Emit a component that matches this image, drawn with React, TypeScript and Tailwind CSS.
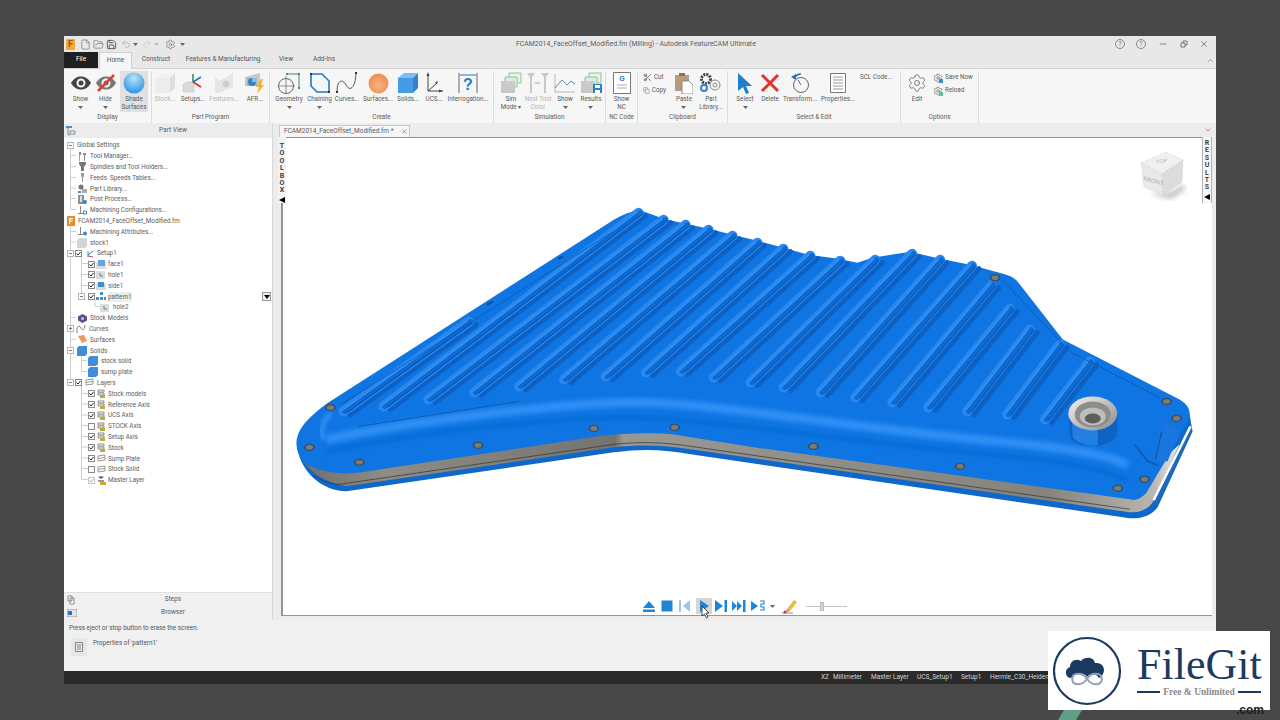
import type { ReactNode } from "react";
import { ChevronDown, ChevronUp, Copy, File, FolderOpen, Minus, Redo2, Save, Scissors, Settings, Undo2, X } from "lucide-react";

const font = "font-['Roboto','Liberation_Sans',sans-serif]";

function Caret({ className = "text-[#666]" }: { className?: string }) {
  return (
    <svg width="5" height="3" viewBox="0 0 5 3" className={className}>
      <path d="M0 0h5L2.5 3z" fill="currentColor" />
    </svg>
  );
}

function RibbonBtn({ w, icon, lines, dim, drop }: { w: string; icon: ReactNode; lines: string[]; dim?: boolean; drop?: boolean }) {
  return (
    <div className={`${w} flex flex-col items-center shrink-0`}>
      <div className="h-[24px] flex items-center justify-center">{icon}</div>
      <div className={`flex flex-col items-center leading-[8px] whitespace-nowrap ${dim ? "text-[#b5b5b5]" : "text-[#5a5a5a]"}`}>
        {lines.map((l) => (
          <span key={l} className="h-[8px]">{l}</span>
        ))}
        {drop && <span className="h-[8px] flex items-center"><Caret /></span>}
      </div>
    </div>
  );
}

function Group({ w, label, children, last }: { w: string; label: string; children: ReactNode; last?: boolean }) {
  return (
    <div className={`${w} shrink-0 flex flex-col ${last ? "" : "border-r border-[#dcdcdc]"}`}>
      <div className="h-[41px] flex">{children}</div>
      <div className="h-[11px] text-center leading-[10px] text-[#5a5a5a]">{label}</div>
    </div>
  );
}

const Eye = ({ slash }: { slash?: boolean }) => (
  <svg width="20" height="20" viewBox="0 0 20 20">
    <path d="M0 10C3 5 6.500 3.500 10 3.500S17 5 20 10c-3 5-6.500 6.500-10 6.500S3 15 0 10z" fill={slash ? "#777" : "#444"} />
    <circle cx="10" cy="10" r="4.500" fill="#f5f5f5" />
    <circle cx="10" cy="10" r="2.500" fill={slash ? "#777" : "#444"} />
    {slash && <path d="M2 18L18 2" stroke="#e23a2e" strokeWidth="2.500" />}
  </svg>
);

const Cube = ({ top, left, right, size = 22 }: { top: string; left: string; right: string; size?: number }) => (
  <svg width={size} height={size} viewBox="0 0 22 22">
    <path d="M1 6L7 1h14l-5 5z" fill={top} />
    <path d="M1 6h15v15H1z" fill={left} />
    <path d="M16 6l5-5v15l-5 5z" fill={right} />
  </svg>
);

const MiniStack = ({ last }: { last?: boolean }) => (
  <svg width="22" height="22" viewBox="0 0 22 22">
    <path d="M9 1h12v10H9z" fill="#e8f4e8" stroke="#8cc79a" />
    <path d="M5 5h12v10H5z" fill="#dcefdf" stroke="#8cc79a" />
    <path d="M1 9h14v12H1z" fill="#c9c9c9" />
    {last && <path d="M13 12h9v9h-9z" fill="#2d7fc8" />}
    {last && <path d="M15 13h5v3h-5zM15 18h5v3h-5z" fill="#fff" />}
  </svg>
);

function RibbonIcon({ name }: { name: string }) {
  switch (name) {
    case "sphere":
      return (
        <svg width="22" height="22" viewBox="0 0 22 22">
          <defs>
            <radialGradient id="sph" cx="50%" cy="28%" r="70%">
              <stop offset="0%" stopColor="#b9e4fb" />
              <stop offset="100%" stopColor="#2e95e4" />
            </radialGradient>
          </defs>
          <circle cx="11" cy="11" r="10.500" fill="url(#sph)" />
        </svg>
      );
    case "setups":
      return (
        <svg width="22" height="22" viewBox="0 0 22 22">
          <path d="M1 13l3-3h8v10H1z" fill="#dadada" stroke="#bdbdbd" strokeWidth=".5" />
          <path d="M11 10V2" stroke="#1f9a56" strokeWidth="1.600" />
          <path d="M11 10l8-5" stroke="#2374d0" strokeWidth="1.600" />
          <path d="M11 10l8 5" stroke="#e0283a" strokeWidth="1.600" />
        </svg>
      );
    case "features":
      return (
        <svg width="22" height="22" viewBox="0 0 22 22">
          <path d="M2 5l4 4v12H2zM6 9l14-8v14l-14 6z" fill="#e6e6e6" />
          <circle cx="13" cy="12" r="3.500" fill="#cfcfcf" />
        </svg>
      );
    case "afr":
      return (
        <svg width="22" height="22" viewBox="0 0 22 22">
          <path d="M1 5l15-4v13H1z" fill="#c8c8c8" />
          <path d="M3 6h10v8H3z" fill="#9bb6cf" />
          <path d="M8 6a4 4 0 1 0 4 4H8z" fill="#2a85d2" />
          <path d="M17 7l-5 8h3l-2 7 7-9h-3l2-6z" fill="#f2b233" />
        </svg>
      );
    case "geometry":
      return (
        <svg width="24" height="24" viewBox="0 0 24 24" fill="none" stroke="#666" strokeWidth="1">
          <circle cx="9" cy="15" r="7.500" />
          <path d="M9 5v18M1 15h17" strokeWidth=".7" />
          <path d="M10 3h12v14" stroke="#5b7a8e" />
          <path d="M9 2h2v2H9zM21 2h2v2h-2zM21 16h2v2h-2z" fill="#2f9e68" stroke="none" />
        </svg>
      );
    case "chaining":
      return (
        <svg width="22" height="22" viewBox="0 0 22 22" fill="none">
          <path d="M2 2h11l7 7v11H8l-6-6z" stroke="#1f7ac8" strokeWidth="1.600" />
          <path d="M1 1h2v2H1zM19 19h2v2h-2z" fill="#333" />
        </svg>
      );
    case "curves":
      return (
        <svg width="24" height="24" viewBox="0 0 24 24" fill="none">
          <path d="M2 21C2 8 8 8 11 14s9 5 10-11" stroke="#555" strokeWidth="1" />
          <path d="M1 20h2v2H1zM20 1h2v2h-2z" fill="#333" />
        </svg>
      );
    case "surfaces":
      return (
        <svg width="21" height="21" viewBox="0 0 21 21">
          <defs>
            <radialGradient id="org" cx="50%" cy="60%" r="60%">
              <stop offset="0%" stopColor="#f9b27f" />
              <stop offset="100%" stopColor="#ec8c4d" />
            </radialGradient>
          </defs>
          <circle cx="10.500" cy="10.500" r="10" fill="url(#org)" />
        </svg>
      );
    case "ucs":
      return (
        <svg width="20" height="22" viewBox="0 0 20 22" fill="none" stroke="#444" strokeWidth="1">
          <path d="M4 3v16h15M4 19l9-8" />
          <path d="M2.500 4L4 0l1.500 4zM15 17.500l4 1.500-4 1.500zM11 10.500l3-1.500-1 3z" fill="#444" stroke="none" />
        </svg>
      );
    case "interrogation":
      return (
        <svg width="22" height="22" viewBox="0 0 22 22" fill="none">
          <path d="M2 1v20M20 1v20" stroke="#666" />
          <path d="M3 3h16" stroke="#1f7ac8" />
          <text x="11" y="18" textAnchor="middle" fontSize="16" fontWeight="700" fill="#1f7ac8" fontFamily="Liberation Sans">?</text>
        </svg>
      );
    case "next":
      return (
        <svg width="22" height="22" viewBox="0 0 22 22" fill="#c8c8c8">
          <path d="M0 1h8L5 5v16H3V5zM14 1h8l-3 4v16h-2V5z" />
          <path d="M8 11h5" stroke="#aaa" />
        </svg>
      );
    case "chart":
      return (
        <svg width="22" height="20" viewBox="0 0 22 20" fill="none">
          <path d="M1 1v18h20" stroke="#b8b8b8" />
          <path d="M1 15l7-8 5 5 4-4 4 3" stroke="#6288a8" />
        </svg>
      );
    case "nc":
      return (
        <svg width="18" height="22" viewBox="0 0 18 22" fill="#fff" stroke="#777">
          <path d="M.500.500h17v21H.500z" />
          <path d="M4 13h10M4 16h10" stroke="#aaa" />
          <text x="9" y="9" textAnchor="middle" fontSize="7" fontWeight="700" fill="#2374c8" stroke="none" fontFamily="Liberation Sans">G</text>
        </svg>
      );
    case "paste":
      return (
        <svg width="18" height="22" viewBox="0 0 18 22">
          <path d="M0 3h14v16H0z" fill="#b99b7a" />
          <path d="M4 1h6v3H4z" fill="#8a7058" />
          <path d="M7 9h7l4 4v9H7z" fill="#fff" stroke="#777" strokeWidth=".8" />
        </svg>
      );
    case "library":
      return (
        <svg width="24" height="22" viewBox="0 0 24 22" fill="none">
          <circle cx="7" cy="7" r="4.500" stroke="#444" strokeWidth="3" strokeDasharray="2 1" />
          <circle cx="16" cy="13" r="5" stroke="#888" />
          <circle cx="16" cy="13" r="2" stroke="#888" />
          <circle cx="5" cy="16" r="3" stroke="#2f85d0" strokeWidth="2" />
        </svg>
      );
    case "select":
      return (
        <svg width="16" height="22" viewBox="0 0 16 22">
          <path d="M1 1l14 13H9l3 7-3 1-3-7-5 4z" fill="#1f7ed0" />
        </svg>
      );
    case "delete":
      return (
        <svg width="20" height="20" viewBox="0 0 20 20">
          <path d="M2 2l16 16M18 2L2 18" stroke="#e0342c" strokeWidth="3" />
        </svg>
      );
    case "transform":
      return (
        <svg width="20" height="22" viewBox="0 0 20 22" fill="none" stroke="#666">
          <circle cx="11" cy="13" r="7.500" />
          <path d="M5 5a7 7 0 0 1 6-3" stroke="#2374c8" strokeWidth="1.400" />
          <path d="M1 5l5-3 0 6z" fill="#2374c8" stroke="none" />
          <path d="M11 13l-3-5" stroke="#2374c8" />
        </svg>
      );
    case "props":
      return (
        <svg width="16" height="20" viewBox="0 0 16 20" fill="#fff" stroke="#777">
          <path d="M.500.500h15v19H.500z" />
          <path d="M3 4h10M3 7h10M3 10h10M3 13h10M3 16h10" stroke="#999" />
        </svg>
      );
    default:
      return null;
  }
}

function SmallGear({ color }: { color: string }) {
  return (
    <span className="relative w-[10px] h-[10px] flex">
      <Settings size={10} className="text-[#666]" strokeWidth={1.600} />
      <span className={`absolute right-0 bottom-0 w-[4px] h-[4px] ${color}`} />
    </span>
  );
}

function Ribbon() {
  return (
    <div className={`h-[55px] bg-[#f6f6f6] border-t border-[#d2d2d2] pt-[2px] flex text-[6.300px] ${font}`}>
      <Group w="w-[88px]" label="Display">
        <div className="w-[4px]" />
        <RibbonBtn w="w-[25px]" icon={<Eye />} lines={["Show"]} drop />
        <RibbonBtn w="w-[25px]" icon={<Eye slash />} lines={["Hide"]} drop />
        <div className="w-[2px]" />
        <div className="w-[28px] h-[41px] bg-[#e0e0e0]">
          <RibbonBtn w="w-[28px]" icon={<RibbonIcon name="sphere" />} lines={["Shade", "Surfaces"]} />
        </div>
      </Group>
      <Group w="w-[118px]" label="Part Program">
        <RibbonBtn w="w-[26px]" icon={<Cube top="#f2f2f2" left="#ececec" right="#dedede" />} lines={["Stock..."]} dim />
        <RibbonBtn w="w-[30px]" icon={<RibbonIcon name="setups" />} lines={["Setups..."]} />
        <RibbonBtn w="w-[32px]" icon={<RibbonIcon name="features" />} lines={["Features..."]} dim />
        <RibbonBtn w="w-[30px]" icon={<RibbonIcon name="afr" />} lines={["AFR..."]} />
      </Group>
      <Group w="w-[224px]" label="Create">
        <RibbonBtn w="w-[38px]" icon={<RibbonIcon name="geometry" />} lines={["Geometry"]} drop />
        <RibbonBtn w="w-[23px]" icon={<RibbonIcon name="chaining" />} lines={["Chaining"]} drop />
        <RibbonBtn w="w-[32px]" icon={<RibbonIcon name="curves" />} lines={["Curves..."]} />
        <RibbonBtn w="w-[30px]" icon={<RibbonIcon name="surfaces" />} lines={["Surfaces..."]} />
        <RibbonBtn w="w-[30px]" icon={<Cube top="#79bdf2" left="#449ce6" right="#2f83cf" />} lines={["Solids..."]} />
        <RibbonBtn w="w-[22px]" icon={<RibbonIcon name="ucs" />} lines={["UCS..."]} />
        <RibbonBtn w="w-[46px]" icon={<RibbonIcon name="interrogation" />} lines={["Interrogation..."]} />
      </Group>
      <Group w="w-[112px]" label="Simulation">
        <div className="w-[2px]" />
        <RibbonBtn w="w-[30px]" icon={<MiniStack />} lines={["Sim", "Mode ▾"]} />
        <RibbonBtn w="w-[24px]" icon={<RibbonIcon name="next" />} lines={["Next Tool", "Color"]} dim />
        <RibbonBtn w="w-[30px]" icon={<RibbonIcon name="chart" />} lines={["Show"]} drop />
        <RibbonBtn w="w-[22px]" icon={<MiniStack last />} lines={["Results"]} drop />
      </Group>
      <Group w="w-[32px]" label="NC Code">
        <RibbonBtn w="w-[31px]" icon={<RibbonIcon name="nc" />} lines={["Show", "NC"]} />
      </Group>
      <Group w="w-[90px]" label="Clipboard">
        <div className="w-[28px] shrink-0 pl-[5px] pt-[2px] flex flex-col gap-[4px] text-[#5a5a5a]">
          <div className="flex items-center gap-[2px] h-[9px]"><Scissors size={9} className="text-[#555]" />Cut</div>
          <div className="flex items-center gap-[2px] h-[9px]"><Copy size={9} className="text-[#777]" />Copy</div>
        </div>
        <div className="w-[4px]" />
        <RibbonBtn w="w-[28px]" icon={<RibbonIcon name="paste" />} lines={["Paste"]} drop />
        <RibbonBtn w="w-[26px]" icon={<RibbonIcon name="library" />} lines={["Part", "Library..."]} />
      </Group>
      <Group w="w-[173px]" label="Select & Edit">
        <div className="w-[4px]" />
        <RibbonBtn w="w-[26px]" icon={<RibbonIcon name="select" />} lines={["Select"]} drop />
        <RibbonBtn w="w-[24px]" icon={<RibbonIcon name="delete" />} lines={["Delete"]} />
        <RibbonBtn w="w-[36px]" icon={<RibbonIcon name="transform" />} lines={["Transform..."]} />
        <RibbonBtn w="w-[40px]" icon={<RibbonIcon name="props" />} lines={["Properties..."]} />
        <div className="pl-[2px] pt-[2px] h-[13px] leading-[9px] text-[#5a5a5a] whitespace-nowrap">SCL Code...</div>
      </Group>
      <Group w="w-[78px]" label="Options">
        <div className="w-[2px]" />
        <RibbonBtn w="w-[28px]" icon={<Settings size={20} strokeWidth={1} className="text-[#666]" />} lines={["Edit"]} />
        <div className="pl-[2px] pt-[2px] flex flex-col gap-[4px] text-[#5a5a5a]">
          <div className="flex items-center gap-[2px] h-[9px] whitespace-nowrap"><SmallGear color="bg-[#3d8fc9]" />Save Now</div>
          <div className="flex items-center gap-[2px] h-[9px]"><SmallGear color="bg-[#5fbf9a]" />Reload</div>
        </div>
      </Group>
    </div>
  );
}

function Expander({ open = true, w }: { open?: boolean; w: string }) {
  return (
    <span className={`${w} shrink-0 flex`}>
      <span className="w-[7px] h-[7px] bg-white border border-[#b5b5b5] flex items-center justify-center relative">
        <span className="w-[3px] h-px bg-[#777]" />
        {!open && <span className="absolute w-px h-[3px] bg-[#777]" />}
      </span>
    </span>
  );
}

function Check({ on = true, faint, w = "w-[8px]" }: { on?: boolean; faint?: boolean; w?: string }) {
  return (
    <span className={`${w} shrink-0 flex`}>
      <span className={`w-[7px] h-[7px] bg-white border ${faint ? "border-[#c5c5c5]" : "border-[#8a8a8a]"} flex items-center justify-center`}>
        {on && (
          <svg width="5" height="5" viewBox="0 0 5 5" fill="none">
            <path d="M.5 2.500l1.500 1.500L4.500 1" stroke={faint ? "#aaa" : "#222"} strokeWidth="1" />
          </svg>
        )}
      </span>
    </span>
  );
}

function TreeIcon({ kind, w }: { kind: string; w: string }) {
  const box = "w-[9px] h-[9px]";
  let g: ReactNode = null;
  if (kind === "tool") g = <svg className={box} viewBox="0 0 9 9"><path d="M1 0h2v3H1.800v6H1zM5 1h3v2H7v6H6V3H5z" fill="#8c8c8c" /></svg>;
  if (kind === "spindle") g = <svg className={box} viewBox="0 0 9 9"><path d="M1 0h7v2L6 5v4H3V5L1 2z" fill="#777" /></svg>;
  if (kind === "feeds") g = <svg className={box} viewBox="0 0 9 9"><path d="M3 0h3v3L5 5v4H4V5L3 3z" fill="#9a9a9a" /></svg>;
  if (kind === "lib") g = <svg className={box} viewBox="0 0 9 9"><circle cx="3" cy="3" r="2.500" fill="#777" /><path d="M4 5h5v4H4z" fill="#aaa" /><path d="M0 7h3v2H0z" fill="#3f8fd2" /></svg>;
  if (kind === "post") g = <svg className={box} viewBox="0 0 9 9"><path d="M0 0h6v9H0z" fill="#8f8f8f" /><path d="M2 1h2v6H2z" fill="#ddd" /><circle cx="7" cy="7" r="2" fill="#2f85d0" /></svg>;
  if (kind === "cfg") g = <svg className={box} viewBox="0 0 9 9"><path d="M2 0v7H0v1h5V7H3V0z" fill="#888" /><path d="M5.500 5h3v3h-3z" fill="none" stroke="#2f85d0" /></svg>;
  if (kind === "attr") g = <svg className={box} viewBox="0 0 9 9"><path d="M2 0v7H0v1h5V7H3V0z" fill="#888" /><circle cx="7" cy="6.500" r="2" fill="#2f85d0" /></svg>;
  if (kind === "logo") g = <svg className="w-[8px] h-[10px]" viewBox="0 0 8 10"><path d="M0 0h8v10H0z" fill="#e8892c" /><path d="M2 2h4v1.200H3.200V4.500H5.500v1.200H3.200V8H2z" fill="#fff" /></svg>;
  if (kind === "stock") g = <svg className="w-[10px] h-[10px]" viewBox="0 0 10 10"><path d="M0 2l2-2h8v8l-2 2H0z" fill="#d4d4d4" /></svg>;
  if (kind === "axes") g = <svg className={box} viewBox="0 0 9 9" fill="none"><path d="M3 8V2" stroke="#2f9e68" /><path d="M3 6l5-4" stroke="#2374c8" /><path d="M3 7l5 1" stroke="#c94c4c" /></svg>;
  if (kind === "face") g = <svg className="w-[10px] h-[9px]" viewBox="0 0 10 9"><path d="M0 2h10v7H0z" fill="#dcdcdc" /><path d="M2 0h7v6H2z" fill="#5ea7e4" /></svg>;
  if (kind === "hole") g = <svg className="w-[10px] h-[9px]" viewBox="0 0 10 9"><path d="M0 1h9v8H0z" fill="#dcdcdc" /><path d="M4 3v3h3" stroke="#5d7f9e" fill="none" /></svg>;
  if (kind === "side") g = <svg className="w-[10px] h-[9px]" viewBox="0 0 10 9"><path d="M0 2h10v7H0z" fill="#dcdcdc" /><path d="M2 1h6v5H2z" fill="#3f8fd2" /></svg>;
  if (kind === "pattern") g = <svg className="w-[10px] h-[9px]" viewBox="0 0 10 9" fill="#3f8fd2"><path d="M4 0h3v3H4zM0 5h3v3H0zM4 5h3v3H4zM8 5h2v3H8z" /></svg>;
  if (kind === "models") g = <svg className={box} viewBox="0 0 9 9"><path d="M4.500 0L9 2.500v4L4.500 9 0 6.500v-4z" fill="#5b4f8f" /><circle cx="4.500" cy="4.500" r="1.500" fill="#c8c2e8" /></svg>;
  if (kind === "curve") g = <svg className="w-[11px] h-[9px]" viewBox="0 0 11 9" fill="none"><path d="M1 9V5c0-3 3-4 4-1s4 2 4-3" stroke="#777" /></svg>;
  if (kind === "surf") g = <svg className={box} viewBox="0 0 9 9"><path d="M0 1l6-1 3 6-5 2z" fill="#ec9a5e" /></svg>;
  if (kind === "solid") g = <svg className="w-[10px] h-[10px]" viewBox="0 0 10 10"><path d="M0 2l2-2h8v8l-2 2H0z" fill="#3f8fd8" /></svg>;
  if (kind === "layers") g = <svg className="w-[9px] h-[9px]" viewBox="0 0 9 9" fill="none" stroke="#999"><path d="M1 2l7-1M1 4.500l7-1M1 7l7-1" /><path d="M1 2v5M8 1v5" /></svg>;
  if (kind === "layerA") g = <svg className="w-[9px] h-[9px]" viewBox="0 0 9 9"><path d="M1 1h6v2H1zM1 4h6v2H1z" fill="none" stroke="#8a8a8a" /><path d="M3 6h5v3H3z" fill="#b7ad3e" /></svg>;
  if (kind === "master") g = <svg className="w-[9px] h-[9px]" viewBox="0 0 9 9"><path d="M1 1l3-1 3 1-3 2z" fill="#6a5f9a" /><path d="M1 4h6v2H1z" fill="#999" /><path d="M3 6h6v3H3z" fill="#d8a92e" /></svg>;
  return <span className={`${w} shrink-0 flex items-center justify-center`}>{g}</span>;
}

type Row = { label: string; pl: string; exp?: string; closed?: boolean; check?: boolean; off?: boolean; faint?: boolean; icon?: string; iw?: string; gap: string; marker?: boolean; sel?: boolean };

const rows: Row[] = [
  { label: "Global Settings", pl: "pl-[3px]", exp: "w-[10px]", gap: "ml-0" },
  { label: "Tool Manager...", pl: "pl-[12px]", icon: "tool", iw: "w-[12px]", gap: "ml-[2px]" },
  { label: "Spindles and Tool Holders...", pl: "pl-[12px]", icon: "spindle", iw: "w-[12px]", gap: "ml-[2px]" },
  { label: "Feeds  Speeds Tables...", pl: "pl-[12px]", icon: "feeds", iw: "w-[12px]", gap: "ml-[2px]" },
  { label: "Part Library...", pl: "pl-[12px]", icon: "lib", iw: "w-[12px]", gap: "ml-[2px]" },
  { label: "Post Process...", pl: "pl-[12px]", icon: "post", iw: "w-[12px]", gap: "ml-[2px]" },
  { label: "Machining Configurations...", pl: "pl-[12px]", icon: "cfg", iw: "w-[12px]", gap: "ml-[2px]" },
  { label: "FCAM2014_FaceOffset_Modified.fm", pl: "pl-[1px]", icon: "logo", iw: "w-[12px]", gap: "ml-px" },
  { label: "Machining Attributes...", pl: "pl-[12px]", icon: "attr", iw: "w-[12px]", gap: "ml-[2px]" },
  { label: "stock1", pl: "pl-[12px]", icon: "stock", iw: "w-[12px]", gap: "ml-[2px]" },
  { label: "Setup1", pl: "pl-[3px]", exp: "w-[8px]", check: true, icon: "axes", iw: "w-[12px]", gap: "ml-[2px]" },
  { label: "face1", pl: "pl-[24px]", check: true, icon: "face", iw: "w-[10px]", gap: "ml-[2px]" },
  { label: "hole1", pl: "pl-[24px]", check: true, icon: "hole", iw: "w-[10px]", gap: "ml-[2px]" },
  { label: "side1", pl: "pl-[24px]", check: true, icon: "side", iw: "w-[10px]", gap: "ml-[2px]" },
  { label: "pattern1", pl: "pl-[14px]", exp: "w-[10px]", check: true, icon: "pattern", iw: "w-[10px]", gap: "ml-[2px]", marker: true, sel: true },
  { label: "hole2", pl: "pl-[36px]", icon: "hole", iw: "w-[10px]", gap: "ml-[3px]" },
  { label: "Stock Models", pl: "pl-[12px]", icon: "models", iw: "w-[12px]", gap: "ml-[2px]" },
  { label: "Curves", pl: "pl-[3px]", exp: "w-[9px]", closed: true, icon: "curve", iw: "w-[11px]", gap: "ml-[2px]" },
  { label: "Surfaces", pl: "pl-[12px]", icon: "surf", iw: "w-[12px]", gap: "ml-[2px]" },
  { label: "Solids", pl: "pl-[3px]", exp: "w-[9px]", icon: "solid", iw: "w-[12px]", gap: "ml-[2px]" },
  { label: "stock solid", pl: "pl-[23px]", icon: "solid", iw: "w-[12px]", gap: "ml-[2px]" },
  { label: "sump plate", pl: "pl-[23px]", icon: "solid", iw: "w-[12px]", gap: "ml-[2px]" },
  { label: "Layers", pl: "pl-[3px]", exp: "w-[8px]", check: true, icon: "layers", iw: "w-[12px]", gap: "ml-[2px]" },
  { label: "Stock models", pl: "pl-[24px]", check: true, icon: "layerA", iw: "w-[10px]", gap: "ml-[2px]" },
  { label: "Reference Axis", pl: "pl-[24px]", check: true, icon: "layerA", iw: "w-[10px]", gap: "ml-[2px]" },
  { label: "UCS Axis", pl: "pl-[24px]", check: true, icon: "layerA", iw: "w-[10px]", gap: "ml-[2px]" },
  { label: "STOCK Axis", pl: "pl-[24px]", check: true, off: true, icon: "layerA", iw: "w-[10px]", gap: "ml-[2px]" },
  { label: "Setup Axis", pl: "pl-[24px]", check: true, icon: "layerA", iw: "w-[10px]", gap: "ml-[2px]" },
  { label: "Stock", pl: "pl-[24px]", check: true, icon: "layerA", iw: "w-[10px]", gap: "ml-[2px]" },
  { label: "Sump Plate", pl: "pl-[24px]", check: true, icon: "layers", iw: "w-[10px]", gap: "ml-[2px]" },
  { label: "Stock Solid", pl: "pl-[24px]", check: true, off: true, icon: "layers", iw: "w-[10px]", gap: "ml-[2px]" },
  { label: "Master Layer", pl: "pl-[24px]", check: true, faint: true, icon: "master", iw: "w-[10px]", gap: "ml-[2px]" },
];

function Tree() {
  return (
    <div className={`flex-1 bg-white relative pt-[2px] text-[6.300px] text-[#5c5c5c] ${font}`}>
      <svg className="absolute left-0 top-0 w-[209px] h-[350px]" viewBox="64 138 209 350" fill="none" stroke="#cfcfcf" strokeWidth="1">
        <path d="M70.500 148V209.500M70.500 155.500H76M70.500 166.500H76M70.500 177.500H76M70.500 188H76M70.500 198.500H76M70.500 209.500H76" />
        <path d="M70.500 225V382M70.500 231.500H76M70.500 242H76M70.500 317.500H76M70.500 339.500H76" />
        <path d="M81.500 257V296M81.500 263.500H88M81.500 274.500H88M81.500 285.500H88M95 300V306.500H100" />
        <path d="M81.500 354V371M81.500 360.500H87M81.500 371.500H87" />
        <path d="M81.500 386V479.500M81.500 393.500H88M81.500 404H88M81.500 415H88M81.500 425.500H88M81.500 436.500H88M81.500 447H88M81.500 458H88M81.500 468.500H88M81.500 479.500H88" />
      </svg>
      {rows.map((r) => (
        <div key={r.label + r.pl} className={`h-[10.800px] flex items-center relative ${r.pl}`}>
          {r.exp && <Expander w={r.exp} open={!r.closed} />}
          {r.check && <Check on={!r.off} faint={r.faint} />}
          {r.icon && r.iw && <TreeIcon kind={r.icon} w={r.iw} />}
          <span className={`${r.gap} whitespace-pre leading-[10px] ${r.sel ? "bg-[#eeeeee]" : ""}`}>{r.label}</span>
          {r.marker && (
            <span className="absolute right-[1px] top-[1px] w-[9px] h-[9px] border border-[#999] bg-[#f0f0f0] flex items-center justify-center">
              <span className="w-0 h-0 border-l-[3px] border-r-[3px] border-t-[4px] border-l-transparent border-r-transparent border-t-black" />
            </span>
          )}
        </div>
      ))}
    </div>
  );
}

function Blue({ d, o = 1 }: { d: string; o?: number }) {
  return (
    <svg width="14" height="14" viewBox="0 0 14 14" fill="#1f86d6" opacity={o}>
      <path d={d} />
    </svg>
  );
}

function Playback() {
  return (
    <div className="h-[18px] flex items-center gap-[4px] relative -translate-x-[3px]">
      <Blue d="M7 2l6 7H1zM1 10.500h12V13H1z" />
      <Blue d="M1.500 1.500h11v11h-11z" />
      <Blue d="M1 1h2v12H1zM12 1v12L5 7z" o={0.45} />
      <div className="w-[16px] h-[16px] bg-[#d5d5d5] flex items-center justify-center relative">
        <Blue d="M3 1l9 6-9 6z" />
        <svg width="9" height="13" viewBox="0 0 9 13" className="absolute left-[5px] top-[8px]">
          <path d="M1 0l7 7H5l2 4-1.500 1-2-4L1 10z" fill="#fff" stroke="#222" strokeWidth=".8" />
        </svg>
      </div>
      <div className="-ml-[2px]"><Blue d="M1 1l8 6-8 6zM10.500 1H13v12h-2.500z" /></div>
      <Blue d="M0 2l5 5-5 5zM5 2l5 5-5 5zM11 1h2.500v12H11z" />
      <svg width="16" height="14" viewBox="0 0 16 14" fill="none">
        <path d="M1 2l7 5-7 5z" fill="#1f86d6" />
        <path d="M10 2h4v3h-3v3h3v3h-4" stroke="#1f86d6" strokeWidth="1.200" />
      </svg>
      <Caret />
      <svg width="16" height="15" viewBox="0 0 16 15" className="ml-[3px]">
        <path d="M5 10l7-9 3 2-7 9z" fill="#f0b93c" />
        <path d="M5 10l3 2-4 1z" fill="#e06a50" />
        <path d="M0 14h11" stroke="#8a8a8a" />
        <circle cx="3" cy="13" r="1.500" fill="#d8332a" />
      </svg>
      <div className="w-[41px] h-[9px] ml-[4px] flex items-center relative">
        <div className="w-full h-px bg-[#c4c4c4]" />
        <div className="absolute left-[14px] w-[4px] h-[9px] bg-[#d4d4d4] border border-[#bcbcbc]" />
      </div>
    </div>
  );
}

function ViewCube() {
  return (
    <svg className="absolute right-[25px] top-[12px]" width="48" height="52" viewBox="0 0 48 52">
      <defs>
        <filter id="cubeShadow"><feGaussianBlur stdDeviation="2.500" /></filter>
      </defs>
      <path d="M10 44l22-2 12-8 2 6-14 9z" fill="#aaa" filter="url(#cubeShadow)" opacity=".7" />
      <path d="M2 13L27 2l17 8-21 14z" fill="#f0f0f0" stroke="#d6d6d6" strokeDasharray="3 1" strokeWidth=".6" />
      <path d="M2 13l21 11 1 21L5 37z" fill="#e9e9e9" stroke="#d6d6d6" strokeDasharray="3 1" strokeWidth=".6" />
      <path d="M23 24l21-14-1 22-19 13z" fill="#dcdcdc" stroke="#d0d0d0" strokeDasharray="3 1" strokeWidth=".6" />
      <text x="23" y="13" fontSize="5.500" fill="#b5b5b5" fontFamily="Liberation Sans" textAnchor="middle" transform="rotate(-10 23 13)">TOP</text>
      <text x="14" y="33" fontSize="6" fill="#a8a8a8" fontFamily="Liberation Sans" textAnchor="middle" transform="rotate(14 14 33)">FRONT</text>
    </svg>
  );
}

const ribs: [number, number, number, number][] = [
  [342, 412, 468, 322], [382, 407, 638, 213], [427, 400, 663, 220], [473, 393, 685, 225], [518, 387, 708, 230], [563, 380, 732, 236],
  [605, 377, 757, 243], [645, 373, 783, 249], [680, 372, 810, 256], [713, 378, 840, 261], [750, 383, 875, 260], [783, 388, 912, 254],
  [820, 393, 940, 260], [855, 398, 972, 266], [892, 403, 992, 285], [928, 408, 1010, 309], [967, 412, 1030, 330], [1007, 415, 1060, 345], [1045, 420, 1090, 362],
];

const holes = [
  [308, 448], [358, 463], [477, 446], [593, 429], [674, 428], [329, 408], [813, 447], [960, 467], [1118, 489], [1145, 480], [1167, 402], [1177, 419], [995, 278],
];

const topEdge = "L613,220 C622,215 630,212 638,210 L663,219 685,224 708,229 732,235 757,241 783,248 808,255 838,259 857,263 872,258 910,252 940,259 970,265 1003,274 C1010,276 1014,278 1017,281 L1063,340 L1180,400 C1188,405 1191,410 1190,418 L1177,443 L1147,493";
const top = `M295,443 C296,430 305,419 327,403 ${topEdge} C1142,499 1136,502 1130,500 L747,447 L673,435 C650,433 620,434 597,437 L360,473 C340,476 320,473 305,465 C298,458 295,452 295,443 Z`;
// closes rim shapes back under the top surface, along its lower contour
const back = "L1130,490 L747,437 L673,425 L597,427 L360,463 L300,440 Z";

function Model() {
  return (
    <svg className="absolute inset-0 w-full h-full" viewBox="282 138 930 478">
      <defs>
        <linearGradient id="rim" x1="0" x2="1" y1="0" y2="0">
          <stop offset="0" stopColor="#6f6d68" />
          <stop offset=".1" stopColor="#8e8c85" />
          <stop offset=".36" stopColor="#757370" />
          <stop offset=".37" stopColor="#9a9892" />
          <stop offset=".85" stopColor="#85837c" />
          <stop offset=".97" stopColor="#b8b6b0" />
          <stop offset="1" stopColor="#e8e8e8" />
        </linearGradient>
        <linearGradient id="steel" x1="0" x2="1" y1="0" y2="1">
          <stop offset="0" stopColor="#f4f4f4" />
          <stop offset="1" stopColor="#8a8a8a" />
        </linearGradient>
        <filter id="soft"><feGaussianBlur stdDeviation="2" /></filter>
        <filter id="soft1"><feGaussianBlur stdDeviation=".5" /></filter>
        <clipPath id="topClip"><path d={top} /></clipPath>
      </defs>
      <path d={`M296,450 C300,472 320,492 345,492 L613,453 C640,449 665,450 690,455 L1130,519 C1142,520 1152,516 1158,508 L1193,432 L1190,415 ${back}`} fill="#0f68c9" />
      <path d={`M296,448 C299,465 318,483 345,487 L613,448 C640,445 665,446 690,450 L1130,513 C1140,514 1148,510 1153,503 L1180,445 ${back}`} fill="url(#rim)" />
      <path d="M312,476 C322,483 335,487 345,484 L613,445 C640,442 665,443 690,447 L1130,510" fill="none" stroke="#34332f" strokeWidth=".7" />
      <path d="M1191,427 L1154,501" stroke="#fff" strokeWidth="2.500" />
      <path d="M1192,430 L1156,505" stroke="#666" strokeWidth=".6" />
      <path d={top} fill="#0e75e2" />
      <g clipPath="url(#topClip)">
        <path d="M325,440 C420,420 560,404 627,403 C700,401 860,430 1000,442 C1060,448 1110,455 1128,466" fill="none" stroke="#2f8ff4" strokeWidth="9" filter="url(#soft)" />
        <path d="M325,452 C420,432 560,418 627,418 C720,420 860,444 1000,456 C1060,462 1110,470 1128,482" fill="none" stroke="#0b68cd" strokeWidth="3" filter="url(#soft)" />
        <path d="M322,440 C318,430 322,420 330,414" fill="none" stroke="#3a96f6" strokeWidth="4" filter="url(#soft)" />
      </g>
      {ribs.map(([a, b, c, d]) => (
        <g key={a}>
          <line x1={a + 7} y1={b + 3} x2={c + 7} y2={d + 3} stroke="#0a61c4" strokeWidth="5" strokeLinecap="round" filter="url(#soft1)" />
          <line x1={a} y1={b} x2={c} y2={d} stroke="#2a88ee" strokeWidth="10" strokeLinecap="round" />
          <line x1={a + 1.500} y1={b} x2={c + 1.500} y2={d} stroke="#0b6ad4" strokeWidth="5" strokeLinecap="round" />
          <line x1={a + 4} y1={b + 1} x2={c + 4} y2={d + 1} stroke="#064a9e" strokeWidth=".9" />
          <line x1={a - 1} y1={b - 1} x2={c - 1} y2={d - 1} stroke="#4aa0f8" strokeWidth=".9" />
        </g>
      ))}
      <path d="M357,427 L518,402" stroke="#0a4e9e" strokeWidth=".7" />
      <path d="M340,405 L612,232 M1003,281 L1070,352 L1160,398" fill="none" stroke="#0a58b6" strokeWidth=".8" />
      {holes.map(([x, y]) => (
        <g key={x}>
          <ellipse cx={x} cy={y} rx="5.500" ry="3.800" fill="#37536e" />
          <ellipse cx={x} cy={y} rx="3.500" ry="2.300" fill="#7d7b72" />
        </g>
      ))}
      <path d="M557,259l5-2M486,305l6-3" stroke="#0b4a8f" strokeWidth="2" />
      <path d="M1069,414 L1070,438 C1076,450 1110,450 1117,436 L1118,414 Z" fill="#0d62c2" />
      <path d="M1072,420 L1073,438 C1080,446 1090,447 1098,446 L1098,420 Z" fill="#2d8df0" opacity=".7" />
      <ellipse cx="1093" cy="414" rx="24.500" ry="17" fill="url(#steel)" />
      <ellipse cx="1093" cy="415" rx="18" ry="13" fill="#8c8c88" />
      <ellipse cx="1093" cy="417" rx="13" ry="9" fill="#bdbdbb" />
      <ellipse cx="1093" cy="419" rx="8" ry="5" fill="#5e5e5c" />
      <path d="M1160,430 L1167,422 L1180,432 L1168,462 L1156,462 Z" fill="#1976df" />
      <path d="M1162,432 L1156,460" stroke="#0a4e9e" strokeWidth="1" />
      <path d="M1135,445 L1148,462 L1158,466" fill="none" stroke="#0a58b6" strokeWidth="1.500" />
    </svg>
  );
}

function VerticalLabel({ text }: { text: string }) {
  return (
    <div className="flex flex-col items-center">
      {text.split("").map((c, i) => (
        <span key={i} className="h-[7.400px] leading-[7px] text-[7px] font-semibold text-[#333]">{c}</span>
      ))}
      <span className="mt-[2px] w-0 h-0 border-t-[3.500px] border-b-[3.500px] border-r-[6px] border-t-transparent border-b-transparent border-r-black" />
    </div>
  );
}

function Logo() {
  return (
    <div className="absolute left-[1048px] top-[631px] w-[222px] h-[79px] bg-white flex items-center">
      <svg width="70" height="70" viewBox="0 0 70 70" className="ml-[5px] mt-[1px] shrink-0">
        <circle cx="34" cy="35" r="33" fill="none" stroke="#1c3a60" strokeWidth="2.200" />
        <path d="M17 42c-5-1-6-9 0-11 0-6 6-9 11-6 4-5 13-4 14 2 7-1 11 5 8 11-1 2-2 3-4 4-3-5-9-5-12-1-3-5-11-5-14 0z" fill="#1c3a60" />
        <path d="M34 43c-3-5-7-6-11-5-5 1-5 9 0 10 4 1 8-1 11-5zm0 0c3-5 7-6 11-5 5 1 5 9 0 10-4 1-8-1-11-5z" fill="none" stroke="#8fa0b5" strokeWidth="2" />
      </svg>
      <div className="ml-[14px] flex flex-col w-[124px] font-['Liberation_Serif',serif]">
        <span className="text-[44px] leading-[44px] text-[#1c3a60] -mt-[1px]">FileGit</span>
        <div className="flex items-center gap-[3px]">
          <span className="flex-1 h-[2px] bg-[#1c3a60]" />
          <span className="text-[9.500px] font-bold leading-[10px] text-[#8a8a8a] whitespace-nowrap">Free &amp; Unlimited</span>
          <span className="flex-1 h-[2px] bg-[#1c3a60]" />
        </div>
      </div>
    </div>
  );
}

export default function App() {
  return (
    <div className="relative w-[1280px] h-[720px] overflow-hidden bg-[#484848] pt-[36px] pl-[64px]">
      <div className={`w-[1152px] h-[648px] flex flex-col bg-[#ececec] ${font}`}>
        {/* title bar */}
        <div className="h-[16px] bg-[#e8e8e8] flex items-center relative text-[#666]">
          <span className="ml-[2px] w-[9px] h-[11px] bg-[#f0a93a] text-[9px] leading-[11px] text-center font-bold text-[#b5471c]">F</span>
          <div className="flex items-center ml-[5px] gap-[2px]">
            <File size={11} strokeWidth={1.300} />
            <FolderOpen size={11} strokeWidth={1.300} />
            <Save size={11} strokeWidth={1.800} className="text-[#444]" />
            <Undo2 size={10} strokeWidth={1.300} className="ml-[2px] text-[#999]" />
            <Caret />
            <Redo2 size={10} strokeWidth={1.300} className="ml-[2px] text-[#c5c5c5]" />
            <Caret className="text-[#bbb]" />
            <Settings size={11} strokeWidth={1.300} className="ml-[4px]" />
            <Caret className="ml-[2px] text-[#666]" />
          </div>
          <span className="absolute left-[452px] text-[6.900px] whitespace-nowrap text-[#5e5e5e]">FCAM2014_FaceOffset_Modified.fm (Milling) - Autodesk FeatureCAM Ultimate</span>
          <div className="ml-auto mr-[7px] flex items-center gap-[11px] text-[#777]">
            <span className="w-[10px] h-[10px] rounded-full border border-[#888] text-[7px] leading-[8px] text-center">?</span>
            <span className="w-[10px] h-[10px] rounded-full border border-[#888] text-[7px] leading-[8px] text-center">?</span>
            <Minus size={10} className="mx-[1px]" />
            <svg width="8" height="8" viewBox="0 0 8 8" fill="none" stroke="#777"><path d="M1 3h4v4H1zM3 3V1h4v4H5" /></svg>
            <X size={10} />
          </div>
        </div>
        {/* tabs */}
        <div className="h-[16px] flex items-stretch text-[6.500px] text-[#555] bg-[#e8e8e8] relative whitespace-nowrap">
          <span className="w-[34px] bg-[#1f1f1f] text-white flex items-center justify-center">File</span>
          <span className="ml-[1px] w-[33px] h-[17px] bg-[#f6f6f6] border border-b-0 border-[#d2d2d2] flex items-center justify-center z-10">Home</span>
          <span className="ml-[10px] w-[28px] flex items-center justify-center">Construct</span>
          <span className="ml-[15px] w-[76px] flex items-center justify-center">Features &amp; Manufacturing</span>
          <span className="ml-[16px] w-[18px] flex items-center justify-center">View</span>
          <span className="ml-[17px] w-[24px] flex items-center justify-center">Add-Ins</span>
          <ChevronUp size={9} className="ml-auto mr-[1px] self-center text-[#888]" />
        </div>
        <Ribbon />
        {/* work area */}
        <div className="h-[497px] flex">
          <div className="w-[209px] shrink-0 flex flex-col border-r border-[#d8d8d8] bg-[#f0f0f0]">
            <div className="h-[15px] flex items-center relative text-[6.500px] text-[#5c5c5c] bg-[#ececec] pl-[10px]">
              <svg width="10" height="10" viewBox="0 0 10 10" className="absolute left-[2px]" fill="none" stroke="#7b8ea0"><path d="M0 1h6" stroke="#3f8fd2" strokeWidth="2" /><path d="M2 2v7h2M4 5h5v3H4z" /></svg>
              <span className="flex-1 text-center">Part View</span>
            </div>
            <Tree />
            <div className="h-[14px] flex items-center relative text-[6.500px] text-[#5c5c5c] border-t border-[#e0e0e0] pl-[10px]">
              <svg width="10" height="10" viewBox="0 0 10 10" className="absolute left-[3px]" fill="#fff" stroke="#888"><path d="M1 1h4v5H1zM3 3h4v6H3z" /></svg>
              <span className="flex-1 text-center">Steps</span>
            </div>
            <div className="h-[14px] flex items-center relative text-[6.500px] text-[#5c5c5c] pl-[10px]">
              <svg width="10" height="8" viewBox="0 0 10 8" className="absolute left-[3px]"><path d="M0 0h10v8H0z" fill="#e4e4e4" stroke="#667" strokeWidth=".6" /><path d="M1 2h4v4H1z" fill="#2374c8" /></svg>
              <span className="flex-1 text-center">Browser</span>
            </div>
          </div>
          <div className="flex-1 flex flex-col">
            <div className="h-[14px] flex items-end relative text-[6.500px] text-[#5c5c5c]">
              <div className="ml-[6px] w-[131px] h-[12px] bg-[#f6f6f6] border border-b-0 border-[#c8c8c8] flex items-center pl-[4px] pr-[1px] justify-between whitespace-nowrap">
                <span>FCAM2014_FaceOffset_Modified.fm *</span>
                <X size={7} />
              </div>
              <ChevronDown size={8} className="absolute right-[4px] top-[3px] text-[#666]" />
            </div>
            <div className="flex-1 flex pl-[8px] pr-[4px] pb-[4px]">
              <div className="flex-1 relative bg-white border-t border-l-2 border-b border-[#949494] flex flex-col justify-end items-center">
                <Model />
                <div className="absolute -left-[5px] -top-[1px] w-[8px] bg-[#f2f2f2] pt-[6px] flex justify-center">
                  <VerticalLabel text="TOOLBOX" />
                </div>
                <div className="absolute right-0 -top-[1px] w-[10px] border-l border-r border-[#b0b0b0] bg-[#f8f8f8] pt-[3px] pb-[3px] flex justify-center">
                  <VerticalLabel text="RESULTS" />
                </div>
                <ViewCube />
                <Playback />
              </div>
            </div>
          </div>
        </div>
        {/* message area */}
        <div className="h-[51px] bg-[#f0f0f0] text-[6.350px] text-[#555] pl-[5px] pt-[3px]">
          <div className="h-[10px] leading-[10px]">Press eject or stop button to erase the screen.</div>
          <div className="flex mt-[5px] ml-[2px] gap-[6px]">
            <div className="w-[16px] h-[18px] bg-[#e6e6e6] flex items-center justify-center">
              <svg width="8" height="10" viewBox="0 0 8 10" fill="none" stroke="#888"><path d="M.500.500h7v9h-7zM2 3h4M2 5h4M2 7h4" /></svg>
            </div>
            <span className="leading-[10px]">Properties of 'pattern1'</span>
          </div>
        </div>
        {/* status bar */}
        <div className="h-[13px] bg-[#2a2a2a] text-[#d4d4d4] text-[6.500px] flex items-center pl-[757px] whitespace-nowrap">
          <span className="w-[12px]">XZ</span>
          <span className="w-[38px]">Millimeter</span>
          <span className="w-[46px]">Master Layer</span>
          <span className="w-[44px]">UCS_Setup1</span>
          <span className="w-[29px]">Setup1</span>
          <span>Hermle_C30_Heidenhain</span>
        </div>
      </div>
      <Logo />
      <span className="absolute left-[1058px] top-[710px] w-[24px] h-[10px] bg-[#5f9f87] [clip-path:polygon(25%_0,100%_0,75%_100%,0_100%)]" />
      <span className="absolute left-[1236px] top-[703px] text-[12px] leading-[14px] font-bold text-[#1c1c1c] font-['Liberation_Sans',sans-serif]">.com</span>
    </div>
  );
}
